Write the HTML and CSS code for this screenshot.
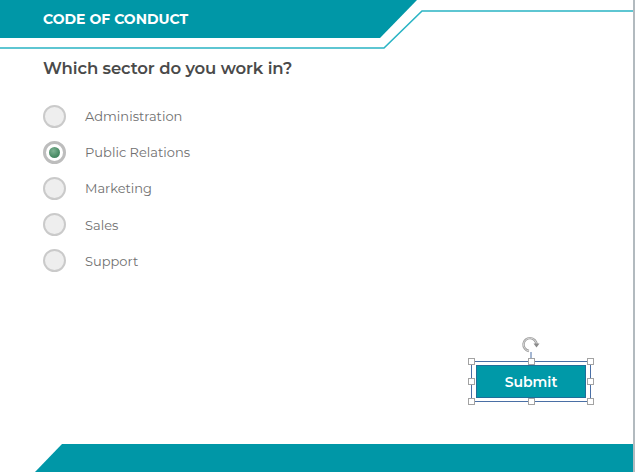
FILE: index.html
```html
<!DOCTYPE html>
<html lang="en">
<head>
<meta charset="utf-8">
<title>Code of Conduct</title>
<link rel="stylesheet" href="styles.css">
</head>
<body>
<div class="page">
  <header class="header">
    <svg class="header-art" width="633" height="50" viewBox="0 0 633 50" aria-hidden="true">
      <polygon points="0,0 417,0 380,38 0,38" fill="#0097a7"/>
      <polyline points="0,48 384,48 422,11 633,11" fill="none" stroke="#2ab4c4" stroke-width="1.6"/>
    </svg>
    <h1 class="header-title">CODE OF CONDUCT</h1>
  </header>

  <main class="content">
    <h2 class="question">Which sector do you work in?</h2>
    <ul class="options">
      <li class="option"><span class="radio"></span><span class="label">Administration</span></li>
      <li class="option"><span class="radio radio-checked"><span class="dot"></span></span><span class="label">Public Relations</span></li>
      <li class="option"><span class="radio"></span><span class="label">Marketing</span></li>
      <li class="option"><span class="radio"></span><span class="label">Sales</span></li>
      <li class="option"><span class="radio"></span><span class="label">Support</span></li>
    </ul>

    <div class="actions">
      <div class="selection">
        <svg class="rotate" width="22" height="26" viewBox="0 0 22 26" aria-hidden="true">
          <path d="M9 16 A6.5 6.5 0 1 1 16.5 9.5" fill="none" stroke="#9a9a9a" stroke-width="2.4"/>
          <path d="M9 16 A6.5 6.5 0 1 1 16.5 9.5" fill="none" stroke="#e8e8e8" stroke-width="0.8"/>
          <polygon points="13.5,8.5 19.5,8.5 16.5,12.5" fill="#8a8a8a"/>
          <line x1="11" y1="17" x2="11" y2="26" stroke="#4a6fa5" stroke-width="1"/>
        </svg>
        <span class="handle h-tl"></span><span class="handle h-tc"></span><span class="handle h-tr"></span>
        <span class="handle h-ml"></span><span class="handle h-mr"></span>
        <span class="handle h-bl"></span><span class="handle h-bc"></span><span class="handle h-br"></span>
        <button class="submit" type="button">Submit</button>
      </div>
    </div>
  </main>

  <footer class="footer-bar"></footer>
</div>
</body>
</html>
```

FILE: styles.css
```css
* { box-sizing: border-box; }

html, body {
  margin: 0;
  padding: 0;
  background: #ffffff;
}

body {
  font-family: "Montserrat", Inter, "Open Sans", sans-serif;
}

.page {
  width: 635px;
  height: 472px;
  border-right: 2px solid #b2babf;
  display: flex;
  flex-direction: column;
  overflow: hidden;
}

.header {
  position: relative;
  height: 50px;
  flex: none;
}

.header-art {
  position: absolute;
  left: 0;
  top: 0;
}

.header-title {
  position: relative;
  margin: 0;
  padding: 11px 0 0 43px;
  font-size: 14px;
  line-height: 17px;
  font-weight: 700;
  color: #ffffff;
  letter-spacing: 0;
}

.content {
  flex: 1;
  display: flex;
  flex-direction: column;
  padding: 8px 0 0 43px;
}

.question {
  margin: 0;
  font-size: 16.5px;
  line-height: 21px;
  font-weight: 600;
  color: #4a4a4a;
  letter-spacing: -0.1px;
}

.options {
  list-style: none;
  margin: 19px 0 0 0;
  padding: 0;
  display: flex;
  flex-direction: column;
}

.option {
  height: 36.2px;
  display: flex;
  align-items: center;
  gap: 19px;
}

.radio {
  width: 23px;
  height: 23px;
  border-radius: 50%;
  border: 2px solid #cacaca;
  background: #eeeeee;
  display: flex;
  align-items: center;
  justify-content: center;
  flex: none;
}

.radio-checked {
  border: 3px solid #bdbdbd;
  background: #ffffff;
}

.dot {
  width: 11px;
  height: 11px;
  border-radius: 50%;
  background: radial-gradient(circle at 40% 35%, #7fb394 0%, #4a8c66 60%, #3d7a58 100%);
}

.label {
  font-size: 13px;
  color: #707070;
  font-weight: 400;
  letter-spacing: 0;
}

.actions {
  margin-top: auto;
  margin-bottom: 42px;
  display: flex;
  justify-content: flex-end;
  padding-right: 42px;
}

.selection {
  position: relative;
  width: 120px;
  height: 41px;
  border: 1px solid #4a6fa5;
  display: flex;
  align-items: center;
  justify-content: center;
}

.rotate {
  position: absolute;
  left: 48px;
  top: -27px;
}

.handle {
  position: absolute;
  width: 7px;
  height: 7px;
  background: #ffffff;
  border: 1.5px solid #a3a3a3;
}

.h-tl { left: -4px; top: -4px; }
.h-tc { left: 56px; top: -4px; }
.h-tr { right: -4px; top: -4px; }
.h-ml { left: -4px; top: 16px; }
.h-mr { right: -4px; top: 16px; }
.h-bl { left: -4px; bottom: -4px; }
.h-bc { left: 56px; bottom: -4px; }
.h-br { right: -4px; bottom: -4px; }

.submit {
  width: 110px;
  height: 33px;
  background: #0099a8;
  border: 1px solid #1f6f9a;
  color: #ffffff;
  font-family: "Montserrat", Inter, "Open Sans", sans-serif;
  font-size: 14px;
  font-weight: 600;
  padding: 0;
}

.footer-bar {
  flex: none;
  height: 28px;
  margin-left: 35px;
  background: #0097a7;
  clip-path: polygon(27px 0, 100% 0, 100% 100%, 0 100%);
}
```
